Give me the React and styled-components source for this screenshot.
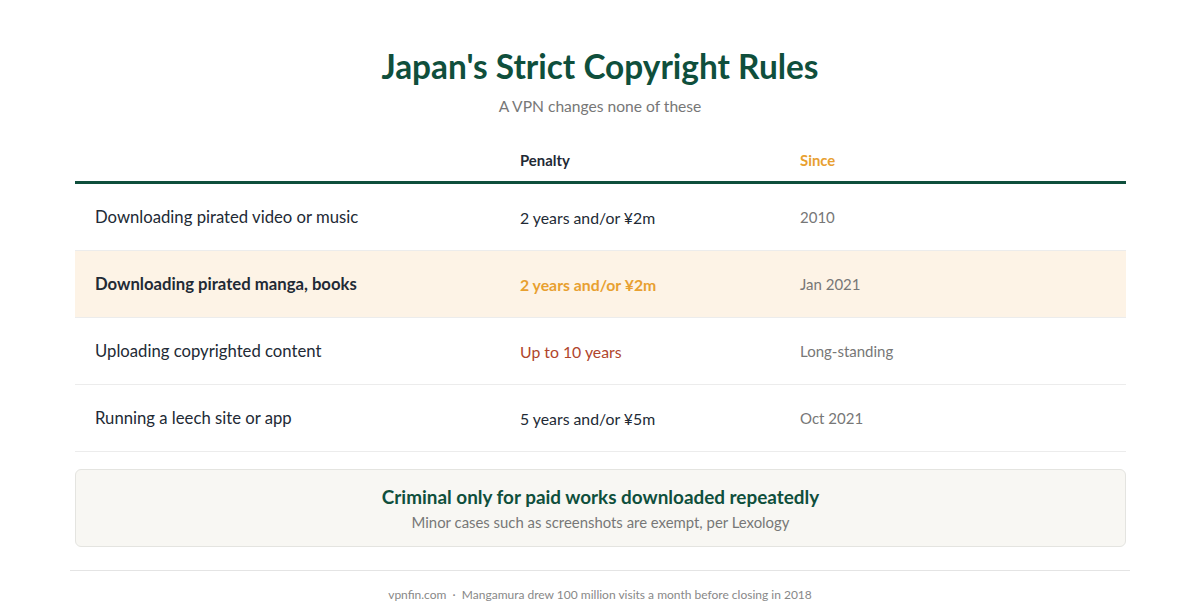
import styled, { createGlobalStyle } from "styled-components";

const Global = createGlobalStyle`
  body { margin: 0; background: #fff; font-family: Lato, "Noto Sans", sans-serif; }
`;

const Page = styled.div`
  width: 1060px;
  margin: 0 auto;
  padding-top: 44px;
`;
const Title = styled.h1`
  margin: 0;
  text-align: center;
  font-size: 33.4px;
  font-weight: 700;
  color: #0f4f3c;
  line-height: 44px;
`;
const Subtitle = styled.div`
  text-align: center;
  font-size: 15.6px;
  color: #777;
  margin-top: 9px;
`;
const Table = styled.div`
  margin: 28px 4px 0 5px;
`;
const Row = styled.div`
  display: grid;
  grid-template-columns: 425px 280px 1fr;
  align-items: center;
  height: ${(p) => (p.$head ? "38px" : "66px")};
  background: ${(p) => (p.$hl ? "#fdf3e6" : "transparent")};
  border-bottom: ${(p) => (p.$head ? "3px solid #0f4f3c" : "1px solid #ececec")};
`;
const Cell = styled.div`
  padding-left: 20px;
  font-size: ${(p) => p.$size || "16.7px"};
  font-weight: ${(p) => (p.$bold ? 700 : 400)};
  color: ${(p) => p.$color || "#222a35"};
  padding-bottom: ${(p) => (p.$head ? "4px" : "0")};
`;
const Callout = styled.div`
  margin: 17px 4px 0 5px;
  background: #f8f7f3;
  border: 1px solid #e4e4e0;
  border-radius: 6px;
  height: 76px;
  display: flex;
  flex-direction: column;
  align-items: center;
  justify-content: center;
  gap: 5px;
`;
const CalloutTitle = styled.div`
  font-size: 18.9px;
  font-weight: 700;
  color: #0f4f3c;
`;
const CalloutSub = styled.div`
  font-size: 14.9px;
  color: #777;
`;
const Footer = styled.div`
  margin-top: 23px;
  border-top: 1px solid #e4e4e4;
  padding-top: 16px;
  text-align: center;
  font-size: 12px;
  color: #888;
`;

const rows = [
  ["Downloading pirated video or music", "2 years and/or ¥2m", "2010"],
  ["Downloading pirated manga, books", "2 years and/or ¥2m", "Jan 2021", "hl"],
  ["Uploading copyrighted content", "Up to 10 years", "Long-standing", "red"],
  ["Running a leech site or app", "5 years and/or ¥5m", "Oct 2021"],
];

export default function App() {
  return (
    <Page>
      <Global />
      <Title>Japan's Strict Copyright Rules</Title>
      <Subtitle>A VPN changes none of these</Subtitle>
      <Table>
        <Row $head>
          <Cell $head />
          <Cell $head $size="14.9px" $bold>Penalty</Cell>
          <Cell $head $size="14.9px" $bold $color="#e8a030">Since</Cell>
        </Row>
        {rows.map(([a, b, c, k]) => (
          <Row key={a} $hl={k === "hl"}>
            <Cell $bold={k === "hl"}>{a}</Cell>
            <Cell
              $size="15.8px"
              $bold={k === "hl"}
              $color={k === "hl" ? "#e8a030" : k === "red" ? "#b0452c" : undefined}
            >
              {b}
            </Cell>
            <Cell $size="15px" $color="#777">{c}</Cell>
          </Row>
        ))}
      </Table>
      <Callout>
        <CalloutTitle>Criminal only for paid works downloaded repeatedly</CalloutTitle>
        <CalloutSub>Minor cases such as screenshots are exempt, per Lexology</CalloutSub>
      </Callout>
      <Footer>
        vpnfin.com &nbsp;·&nbsp; Mangamura drew 100 million visits a month before closing in 2018
      </Footer>
    </Page>
  );
}
